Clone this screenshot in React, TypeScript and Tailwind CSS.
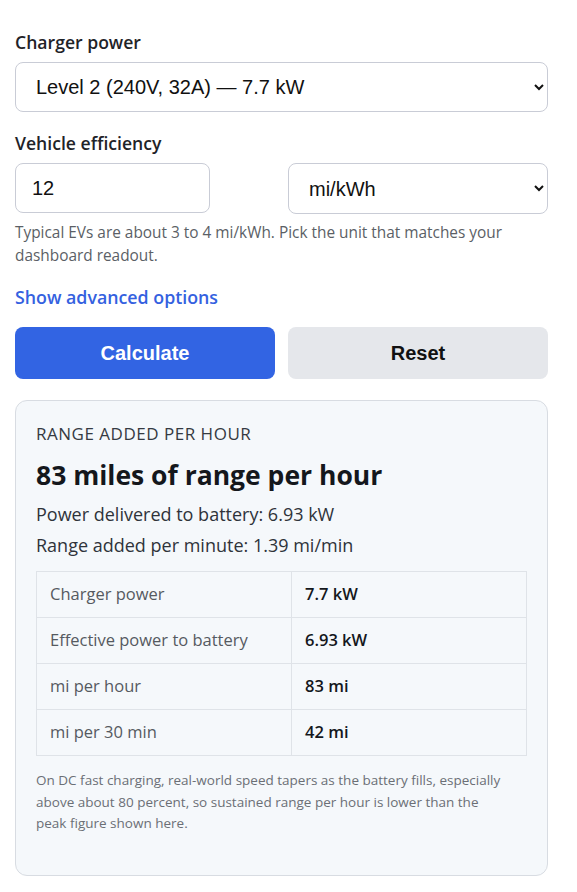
import React, { useState } from "react";

const rows = [
  { label: "Charger power", value: "7.7 kW" },
  { label: "Effective power to battery", value: "6.93 kW" },
  { label: "mi per hour", value: "83 mi" },
  { label: "mi per 30 min", value: "42 mi" },
];

export default function App() {
  const [charger, setCharger] = useState("l2-32");
  const [efficiency, setEfficiency] = useState("12");
  const [unit, setUnit] = useState("mi-kwh");

  return (
    <div className="w-[533px] mx-[15px] pt-[30px] pb-4 font-['Open_Sans','Noto_Sans',sans-serif] text-[#1f2328]">
      <label className="block text-[17.6px] font-semibold leading-6">Charger power</label>
      <select
        value={charger}
        onChange={(e) => setCharger(e.target.value)}
        className="mt-[8px] w-full h-[50px] pl-4 pr-2 rounded-lg border border-[#c9ccd6] bg-white text-[20px] font-['Liberation_Sans',Arial,sans-serif] text-[#111]"
      >
        <option value="l1">Level 1 (120V, 12A) — 1.4 kW</option>
        <option value="l2-32">Level 2 (240V, 32A) — 7.7 kW</option>
        <option value="l2-48">Level 2 (240V, 48A) — 11.5 kW</option>
      </select>

      <label className="block mt-[19px] text-[17.6px] font-semibold leading-6">Vehicle efficiency</label>
      <div className="mt-[8px] flex justify-between">
        <input
          value={efficiency}
          onChange={(e) => setEfficiency(e.target.value)}
          className="w-[195px] h-[50px] px-4 rounded-lg border border-[#c9ccd6] bg-white text-[20px] font-['Liberation_Sans',Arial,sans-serif] text-[#111] outline-none"
        />
        <select
          value={unit}
          onChange={(e) => setUnit(e.target.value)}
          className="w-[260px] h-[51px] pl-4 pr-2 rounded-lg border border-[#c9ccd6] bg-white text-[20px] font-['Liberation_Sans',Arial,sans-serif] text-[#111]"
        >
          <option value="mi-kwh">mi/kWh</option>
          <option value="kwh-100mi">kWh/100 mi</option>
          <option value="wh-mi">Wh/mi</option>
        </select>
      </div>
      <p className="mt-[7px] text-[15.4px] leading-[23px] text-[#5b5f66]">
        Typical EVs are about 3 to 4 mi/kWh. Pick the unit that matches your dashboard readout.
      </p>

      <button className="block mt-[18px] text-[17.8px] font-semibold leading-6 text-[#3461e0]">
        Show advanced options
      </button>

      <div className="mt-[18px] flex gap-[13px] font-['Liberation_Sans',Arial,sans-serif] text-[20px] font-bold">
        <button className="flex-1 h-[52px] rounded-lg bg-[#3264e3] text-white">Calculate</button>
        <button className="flex-1 h-[52px] rounded-lg bg-[#e5e7eb] text-[#111]">Reset</button>
      </div>

      <section className="mt-[21px] rounded-xl border border-[#d8dce2] bg-[#f5f8fb] px-5 pt-[21px] pb-[40px]">
        <h3 className="text-[17px] font-medium leading-6 uppercase tracking-[0.03em] text-[#353a42]">Range added per hour</h3>
        <h2 className="mt-[13px] text-[26.5px] font-bold leading-8 text-[#14171c]">83 miles of range per hour</h2>
        <p className="mt-[8px] text-[18px] leading-[31px] text-[#2f333a]">Power delivered to battery: 6.93 kW</p>
        <p className="text-[18px] leading-[31px] text-[#2f333a]">Range added per minute: 1.39 mi/min</p>

        <table className="mt-[10px] w-full border-collapse text-[16.5px]">
          <tbody>
            {rows.map((r) => (
              <tr key={r.label} className="h-[46px]">
                <td className="w-[255px] border border-[#dfe3e8] pl-[13px] text-[#555a61]">{r.label}</td>
                <td className="border border-[#dfe3e8] pl-[13px] font-semibold text-[#14171c]">{r.value}</td>
              </tr>
            ))}
          </tbody>
        </table>

        <p className="mt-[14px] max-w-[470px] text-[13.5px] leading-[21.5px] text-[#6b6f76]">
          On DC fast charging, real-world speed tapers as the battery fills, especially above about 80
          percent, so sustained range per hour is lower than the peak figure shown here.
        </p>
      </section>
    </div>
  );
}
